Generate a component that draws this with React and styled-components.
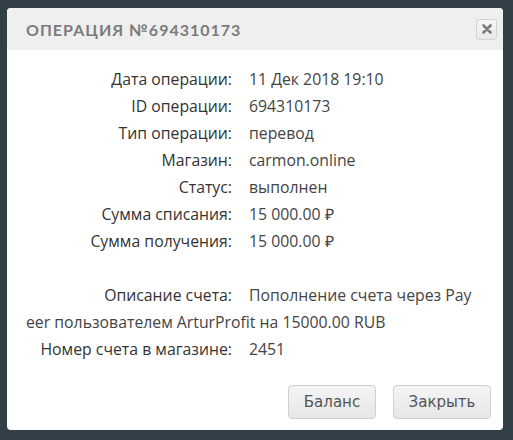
import React from "react";
import styled, { createGlobalStyle } from "styled-components";

const GlobalStyle = createGlobalStyle`
    html, body {
        margin: 0;
        padding: 0;
        background: #333f47;
    }
`;

const rows = [
    ["Дата операции:", "11 Дек 2018 19:10"],
    ["ID операции:", "694310173"],
    ["Тип операции:", "перевод"],
    ["Магазин:", "carmon.online"],
    ["Статус:", "выполнен"],
    ["Сумма списания:", "15 000.00 ₽"],
    ["Сумма получения:", "15 000.00 ₽"],
];

const App = () => {
    return (
        <StPage>
            <GlobalStyle />
            <StDialog>
                <StHeader>
                    <StTitle>Операция №694310173</StTitle>
                    <StCloseBtn aria-label="close">
                        <svg width="10" height="10" viewBox="0 0 10 10">
                            <path d="M1.5 1.5 L8.5 8.5 M8.5 1.5 L1.5 8.5" stroke="#7a7a7a" strokeWidth="2.6" strokeLinecap="round" />
                        </svg>
                    </StCloseBtn>
                </StHeader>

                <StBody>
                    {rows.map(([label, value]) => (
                        <StRow key={label}>
                            <StLabel>{label}</StLabel>
                            <StValue>{value}</StValue>
                        </StRow>
                    ))}
                    <StGap />
                    <StRow>
                        <StLabel>Описание счета:</StLabel>
                        <StValue>Пополнение счета через Payeer пользователем ArturProfit на 15000.00 RUB</StValue>
                    </StRow>
                    <StRow>
                        <StLabel>Номер счета в магазине:</StLabel>
                        <StValue>2451</StValue>
                    </StRow>
                </StBody>

                <StFooter>
                    <StButton $w={88}>Баланс</StButton>
                    <StButton $w={98}>Закрыть</StButton>
                </StFooter>
            </StDialog>
        </StPage>
    );
};

export default App;

const StPage = styled.div`
    width: 513px;
    height: 440px;
    padding: 8px 10px 10px 7px;
    box-sizing: border-box;
`;

const StDialog = styled.div`
    width: 496px;
    height: 422px;
    background: #fff;
    border-radius: 4px;
    overflow: hidden;
    display: flex;
    flex-direction: column;
`;

const StHeader = styled.div`
    height: 42px;
    background: #efefef;
    padding: 0 6px 0 19px;
    display: flex;
    align-items: center;
    justify-content: space-between;
`;

const StTitle = styled.div`
    font-family: "Lato", sans-serif;
    font-weight: 700;
    font-size: 16px;
    letter-spacing: 1px;
    text-transform: uppercase;
    color: #7b7b7b;
    padding-top: 1px;
`;

const StCloseBtn = styled.button`
    width: 21px;
    height: 21px;
    padding: 0;
    border: 1px solid #d2d2d2;
    border-radius: 3px;
    background: linear-gradient(#f7f7f7, #e8e8e8);
    display: flex;
    align-items: center;
    justify-content: center;
`;

const StBody = styled.div`
    padding: 16px 25px 0 19px;
    font-family: "Open Sans", sans-serif;
    font-size: 15.8px;
    color: #333;
`;

const StRow = styled.div`
    line-height: 27px;
    min-height: 27px;
    word-break: break-all;
`;

const StGap = styled.div`
    height: 27px;
`;

const StLabel = styled.span`
    display: inline-block;
    width: 206px;
    margin-right: 17px;
    text-align: right;
    word-break: normal;
    color: #333;
`;

const StValue = styled.span`
    color: #444;
`;

const StFooter = styled.div`
    margin-top: auto;
    padding: 0 12px 11px 0;
    display: flex;
    justify-content: flex-end;
    gap: 17px;
`;

const StButton = styled.button`
    width: ${(p) => p.$w}px;
    height: 34px;
    padding: 0;
    font-family: "DejaVu Sans", sans-serif;
    font-size: 15px;
    color: #555;
    border: 1px solid #d0d0d0;
    border-radius: 4px;
    background: linear-gradient(#f5f5f5, #e6e6e6);
`;
